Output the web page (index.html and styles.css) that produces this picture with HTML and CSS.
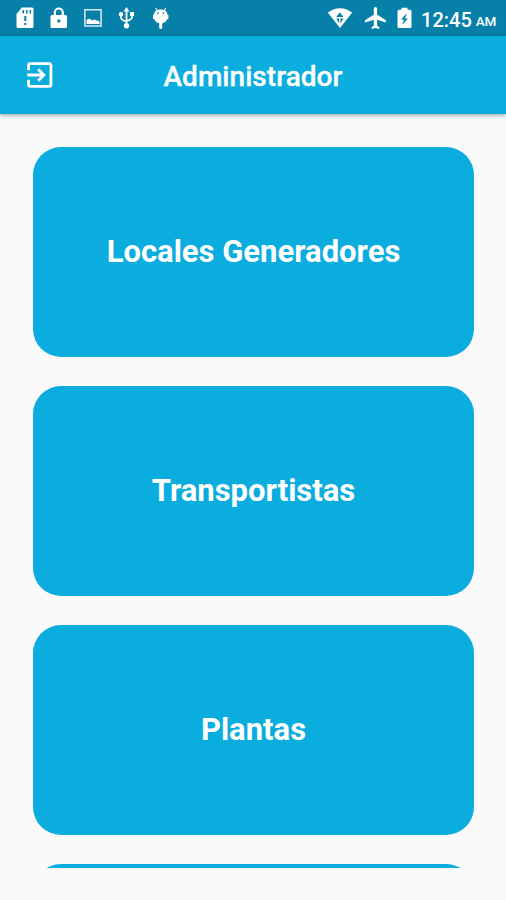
FILE: index.html
```html
<!DOCTYPE html>
<html lang="es">

<head>
  <meta charset="utf-8">
  <meta name="viewport" content="width=device-width">
  <title>Administrador</title>
  <link rel="stylesheet" href="styles.css">
</head>

<body>

  <div class="status">
    <div class="notifications">
      <!-- sd card -->
      <svg width="18" height="22" viewBox="0 0 18 22">
        <path fill="#fff" fill-rule="evenodd" d="M6 .5h10A1.500 1.500 0 0 1 17.500 2v17.500a1.500 1.500 0 0 1-1.500 1.500H2A1.500 1.500 0 0 1 .5 19.500V7zM6.500 3v3.500h1.600V3zM10 3v3.500h1.600V3zM13.500 3v3.500h1.600V3zM8.300 9v5h2V9zM8.300 16v2h2v-2z"/>
      </svg>
      <!-- lock -->
      <svg width="18" height="22" viewBox="0 0 18 22">
        <path fill="none" stroke="#fff" stroke-width="2.200" d="M4.800 9V5.500a4 4 0 0 1 8 0V9"/>
        <path fill="#fff" fill-rule="evenodd" d="M2 8h13.500A1.500 1.500 0 0 1 17 9.500v10a1.500 1.500 0 0 1-1.500 1.500H2A1.500 1.500 0 0 1 .5 19.500v-10A1.500 1.500 0 0 1 2 8zM8.800 12.200a1.700 1.700 0 1 0 0 3.400 1.700 1.700 0 0 0 0-3.400z"/>
      </svg>
      <!-- picture -->
      <svg width="18" height="22" viewBox="0 0 18 22">
        <path fill="none" stroke="#dcecf2" stroke-width="1.500" d="M.9 2.800h16.200v16.200H.9z"/>
        <path fill="#fff" d="M2.500 17v-4l3-1.500 2.500 2 2-1 5.500 2V17z"/>
      </svg>
      <!-- usb -->
      <svg width="18" height="22" viewBox="0 0 18 22">
        <path fill="none" stroke="#fff" stroke-width="1.800" d="M8.500 3v16M3 7v3.500q0 2.500 5.500 4M14 7v3q0 2.500-5.500 4"/>
        <path fill="#fff" d="M8.500 0l3 4.500h-6zM12 5h4v4h-4z"/>
        <circle fill="#fff" cx="3" cy="7.200" r="2.200"/>
        <circle fill="#fff" cx="8.500" cy="18.700" r="2.700"/>
      </svg>
      <!-- android debug -->
      <svg width="18" height="22" viewBox="0 0 18 22">
        <path fill="none" stroke="#fff" stroke-width="1.200" stroke-linecap="round" d="M4 1.500l1.500 2.500M13.500 1.500L12 4"/>
        <path fill="#fff" fill-rule="evenodd" d="M2 7.500C2 4.500 5 2.500 8.700 2.500s6.700 2 6.700 5l1 .5v4l-1.300.300C14.500 14.500 12.500 16.200 10.200 16.200v4.300a1.500 1.500 0 0 1-3 0v-4.300C5 16.200 3 14.500 2.500 12.300L1 12V8zM5.300 5.500V7h1.500V5.500zM10.700 5.500V7h1.500V5.500z"/>
      </svg>
    </div>
    <div class="system">
      <!-- wifi -->
      <svg class="wifi" width="26" height="22" viewBox="0 0 26 22">
        <path fill="#fff" d="M.8 5.500Q13-3 25.200 5.500L13 21z"/>
        <path fill="#0a80a8" d="M12.800 5.200l3.600 4.800H9.200zM9.200 11.500h3v5zM13.500 11.500h3l-3 5z"/>
      </svg>
      <!-- airplane -->
      <svg class="plane" width="22" height="22" viewBox="2 2 20 20">
        <path fill="#fff" d="M21 16v-2l-8-5V3.500c0-.83-.67-1.500-1.500-1.500S10 2.670 10 3.500V9l-8 5v2l8-2.500V19l-2 1.500V22l3.500-1 3.500 1v-1.500L13 19v-5.500z"/>
      </svg>
      <!-- battery -->
      <svg class="battery" width="15" height="22" viewBox="0 0 15 22">
        <path fill="#fff" fill-rule="evenodd" d="M4.500 .7h6v2H13a1.500 1.500 0 0 1 1.500 1.500v15.300A1.500 1.500 0 0 1 13 21H2A1.500 1.500 0 0 1 .5 19.500V4.200A1.500 1.500 0 0 1 2 2.700h2.500zM10 6l-6 6.500h3L5 18l6-6.500H8z"/>
      </svg>
      <span class="time">12:45</span>
      <span class="ampm">AM</span>
    </div>
  </div>

  <header class="appbar">
    <svg class="exit" width="32" height="32" viewBox="0 0 24 24">
      <path fill="none" stroke="#fff" stroke-width="2.100" d="M3.400 8.500V4.700a1.200 1.200 0 0 1 1.200-1.200h14.400a1.200 1.200 0 0 1 1.200 1.200v14.600a1.200 1.200 0 0 1-1.200 1.200H4.600a1.200 1.200 0 0 1-1.200-1.200v-3.800"/>
      <path fill="none" stroke="#fff" stroke-width="2.100" d="M2.400 12h12.200M10.600 7.700l4.300 4.300-4.300 4.300"/>
    </svg>
    <h1 class="title">Administrador</h1>
  </header>

  <main class="list">
    <div class="card">Locales Generadores</div>
    <div class="card">Transportistas</div>
    <div class="card">Plantas</div>
    <div class="card"></div>
  </main>

</body>

</html>
```
FILE: styles.css
```css
* {
  box-sizing: border-box;
}

body {
  margin: 0;
  height: 900px;
  display: flex;
  flex-direction: column;
  overflow: hidden;
  background-color: #fafafa;
  color: white;
  font-family: Roboto, sans-serif;
}

svg {
  display: block;
  flex-shrink: 0;
}

.status {
  height: 36px;
  flex-shrink: 0;
  display: flex;
  justify-content: space-between;
  padding: 7px 10px 0 16px;
  background-color: #0780a9;
}

.notifications {
  display: flex;
  gap: 16px;
}

.system {
  display: flex;
}

.plane {
  margin-left: 12px;
}

.battery {
  margin-left: 10px;
}

.time {
  margin-left: 9px;
  font-size: 20px;
  font-weight: 500;
  line-height: 26px;
}

.ampm {
  margin-left: 4px;
  font-size: 13.5px;
  font-weight: 500;
  line-height: 29px;
  letter-spacing: -0.3px;
}

.appbar {
  height: 78px;
  flex-shrink: 0;
  display: grid;
  grid-template-columns: 56px 1fr 56px;
  align-items: center;
  background-color: #0baddf;
  box-shadow: 0 1px 4px rgba(0, 0, 0, 0.4);
  z-index: 1;
}

.exit {
  margin-left: 24px;
}

.title {
  margin: 2px 0 0;
  text-align: center;
  font-size: 28px;
  font-weight: 500;
  letter-spacing: 0.05px;
  -webkit-text-stroke: 0.3px white;
}

.list {
  height: 754px;
  flex-shrink: 0;
  display: flex;
  flex-direction: column;
  gap: 29px;
  padding: 33px 32px 0 33px;
  overflow: hidden;
}

.card {
  height: 210px;
  flex-shrink: 0;
  display: flex;
  align-items: center;
  justify-content: center;
  padding-bottom: 2px;
  border-radius: 28px;
  background-color: #0badde;
  font-size: 31px;
  font-weight: bold;
}
```
